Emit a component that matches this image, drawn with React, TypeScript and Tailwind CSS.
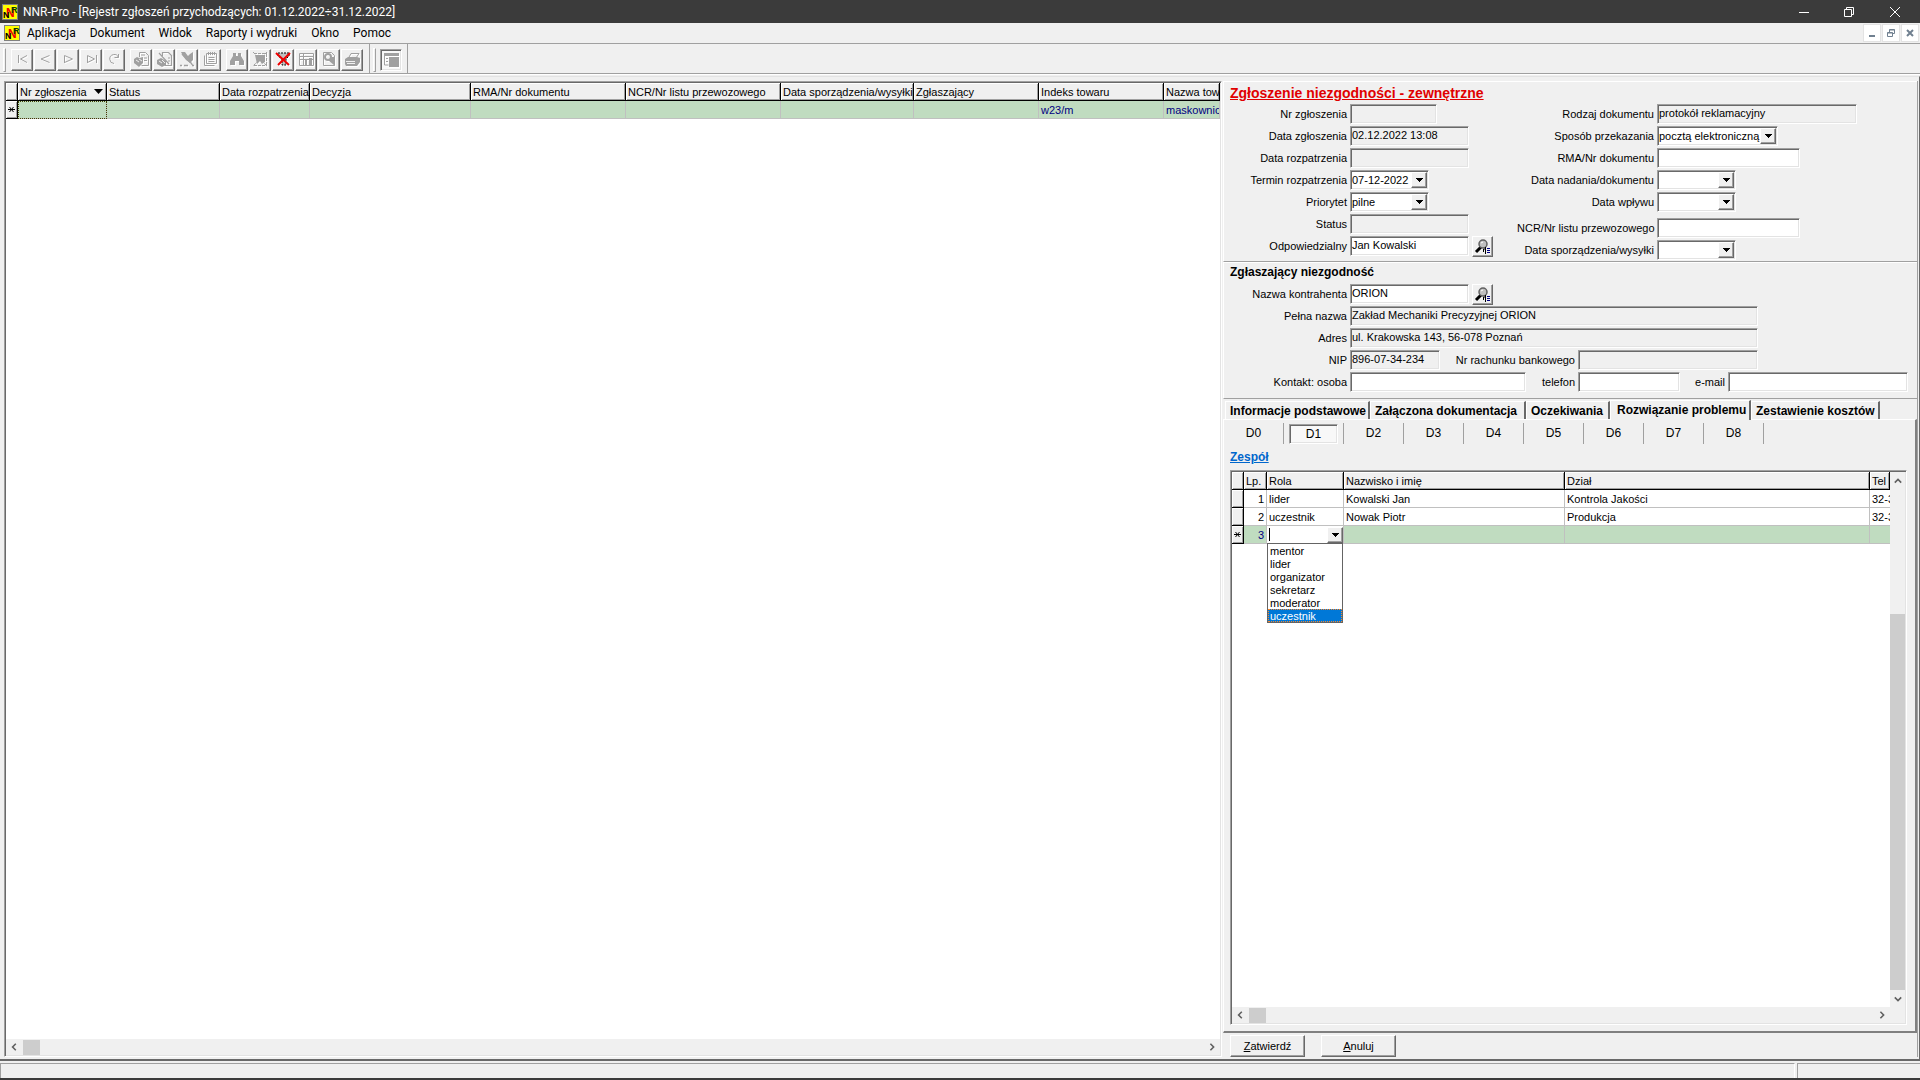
import React, { useState } from 'react';
import clsx from 'clsx';

const SUNKEN =
  'border border-t-[#a0a0a0] border-l-[#a0a0a0] border-b-white border-r-white shadow-[inset_1px_1px_0_#696969,inset_-1px_-1px_0_#e3e3e3]';
const RAISED =
  'border border-t-white border-l-white border-b-[#696969] border-r-[#696969] shadow-[inset_-1px_-1px_0_#a0a0a0] bg-[#f0f0f0]';

const menuItems = ['Aplikacja', 'Dokument', 'Widok', 'Raporty i wydruki', 'Okno', 'Pomoc'];

const registerColumns = [
  { name: 'Nr zgłoszenia', width: 'w-[89px]', sorted: true },
  { name: 'Status', width: 'w-[113px]' },
  { name: 'Data rozpatrzenia', width: 'w-[90px]' },
  { name: 'Decyzja', width: 'w-[161px]' },
  { name: 'RMA/Nr dokumentu', width: 'w-[155px]' },
  { name: 'NCR/Nr listu przewozowego', width: 'w-[155px]' },
  { name: 'Data sporządzenia/wysyłki', width: 'w-[133px]' },
  { name: 'Zgłaszający', width: 'w-[125px]' },
  { name: 'Indeks towaru', width: 'w-[125px]', value: 'w23/m' },
  { name: 'Nazwa tow', width: '', value: 'maskownic' },
];

const team = [
  { lp: 1, role: 'lider', name: 'Kowalski Jan', dept: 'Kontrola Jakości', tel: '32-3' },
  { lp: 2, role: 'uczestnik', name: 'Nowak Piotr', dept: 'Produkcja', tel: '32-3' },
];

const roles = ['mentor', 'lider', 'organizator', 'sekretarz', 'moderator', 'uczestnik'];

const detailTabs = [
  { name: 'Informacje podstawowe', width: 'w-[145px]' },
  { name: 'Załączona dokumentacja', width: 'w-[156px]' },
  { name: 'Oczekiwania', width: 'w-[84px]' },
  { name: 'Rozwiązanie problemu', width: 'w-[141px]' },
  { name: 'Zestawienie kosztów', width: 'w-[129px]' },
];

const steps = ['D0', 'D1', 'D2', 'D3', 'D4', 'D5', 'D6', 'D7', 'D8'];

const AppLogo = ({ className }: { className?: string }) => (
  <svg viewBox="0 0 16 16" className={clsx('h-4 w-4 shrink-0', className)} aria-hidden="true">
    <rect width="16" height="16" fill="#808080" />
    <rect x="1" y="1" width="14" height="14" fill="#ffff00" />
    <g fontFamily="Liberation Sans" fontWeight="700">
      <text x="4" y="13" fontSize="12" fill="#f00000">N</text>
      <text x="1" y="14" fontSize="9" fill="#000">N</text>
      <text x="9" y="9" fontSize="9" fill="#004000">R</text>
    </g>
  </svg>
);

const DownArrow = ({ className }: { className?: string }) => (
  <svg viewBox="0 0 7 4" className={clsx('h-1 w-[7px]', className)} shapeRendering="crispEdges" aria-hidden="true">
    <path d="M0 0h7v1h-1v1h-1v1h-1v1h-1v-1h-1v-1h-1v-1h-1z" fill="#000" />
  </svg>
);

const toolIcons: Record<string, React.ReactNode> = {
  first: <path d="M4.500 4v8M13 4.500L6.500 8l6.500 3.500" fill="none" stroke="currentColor" />,
  prev: <path d="M12.500 11.500L4 8l8.500-3.500" fill="none" stroke="currentColor" />,
  next: <path d="M4.500 12V4.500L12.500 8l-8 3.500" fill="none" stroke="currentColor" />,
  last: <path d="M13.500 4v8M4.500 12V4.500L11.500 8l-7 3.500" fill="none" stroke="currentColor" />,
  refresh: <path d="M12.500 6.500A4.500 4.500 0 1 0 8 12.500M12.500 3v3.500h-4" fill="none" stroke="currentColor" />,
  add: (
    <>
      <path d="M6.500 6V1.500h6l3 3v10h-7M8 4h4M11 7h3M11 9.500h3" fill="none" stroke="currentColor" />
      <path d="M1 8l3-2 2 1 4-1v6l-4 4-5-4z" fill="currentColor" />
      <path d="M3 9l3 2M6 8l3 2" stroke="#f0f0f0" />
    </>
  ),
  edit: (
    <>
      <path d="M6.500 5V1.500h6l3 3v10h-7M12 7h2M12 10h2M3 2l10 11" fill="none" stroke="currentColor" strokeWidth="1.200" />
      <path d="M1 9l4-2 5 3v4l-4 2-5-3z" fill="currentColor" />
      <path d="M3 10l3 2M6 9l3 3" stroke="#f0f0f0" />
    </>
  ),
  remove: (
    <>
      <path d="M3 3l10 10M13 13v1M1 14.500h2M5 14.500h4M13 14.500h2" fill="none" stroke="currentColor" strokeWidth="1.500" />
      <path d="M2 1h4l3 4 2-2 3-2v8l-3 3-4-3-3-4z" fill="currentColor" />
    </>
  ),
  notes: (
    <>
      <path d="M4.500 2.500h10v10h-10zM2.500 4.500v10h10" fill="none" stroke="currentColor" />
      <path d="M6.500 1v3M8.500 1v3M10.500 1v3M12.500 1v3M6.500 6.500h6M6.500 8.500h6M6.500 10.500h6" stroke="currentColor" />
    </>
  ),
  find: <path d="M4 2h3v3h2V2h3v3l3 5v4h-5v-4H6v4H1v-4l3-5z" fill="currentColor" />,
  filter: (
    <>
      <path d="M3 4h10v7l-3 2-2-3-3 3z" fill="currentColor" />
      <path d="M1 1l14 14M15 1L1 15M2 2.500h13M2 14.500h13M14.500 3v11" fill="none" stroke="currentColor" strokeDasharray="3 1" />
    </>
  ),
  clearFilter: (
    <>
      <path d="M3 2h11v3l-3 3v6H7V8L3 5z" fill="#c0c0c0" stroke="#000" strokeDasharray="2 1" />
      <path d="M1 2l13 12M15 2L3 14" fill="none" stroke="#f00000" strokeWidth="2" />
    </>
  ),
  table: (
    <>
      <path d="M1.500 2.500h14v12h-14zM2 5.500h13M2 8.500h13M5.500 3v11" fill="none" stroke="currentColor" />
      <path d="M7 9h2v5H7zM11 7h3v7h-3z" fill="currentColor" />
    </>
  ),
  preview: (
    <>
      <path d="M2.500 1.500h8l3 3v10h-11z" fill="none" stroke="currentColor" />
      <circle cx="7" cy="6" r="3" fill="none" stroke="currentColor" strokeWidth="2" />
      <path d="M7 9l7 6v-9h-3z" fill="currentColor" />
    </>
  ),
  print: (
    <>
      <path d="M4.500 7L7 2.500h8L12 7" fill="none" stroke="currentColor" />
      <path d="M1 8l3-2h9l3 1v4l-3 4H2l-1-2z" fill="currentColor" />
      <path d="M2 10.500h9M3 12.500h8" stroke="#f0f0f0" />
    </>
  ),
  panel: (
    <>
      <path d="M1 2h15v3H1z" fill="currentColor" />
      <path d="M1.500 5v9h4M3 7.500h2M3 10.500h2" fill="none" stroke="currentColor" />
      <path d="M6 6h10v10H6z" fill="currentColor" />
    </>
  ),
};

const toolGroups = [
  ['first', 'prev', 'next', 'last', 'refresh'],
  ['add', 'edit', 'remove', 'notes'],
  ['find', 'filter', 'clearFilter', 'table', 'preview', 'print'],
];

const ToolIcon = ({ name }: { name: string }) => (
  <svg viewBox="0 0 17 17" className="h-[17px] w-[17px] text-[#a0a0a0] drop-shadow-[1px_1px_0_#fff]" aria-hidden="true">
    {toolIcons[name]}
  </svg>
);

const Grip = () => <div className="h-6 w-[3px] border border-t-white border-l-white border-b-[#a0a0a0] border-r-[#a0a0a0]" />;

const Toolbar = () => (
  <div className="flex h-[30px] shrink-0 items-stretch border-b border-[#a0a0a0] shadow-[0_1px_0_#fff]">
    <div className="flex items-center gap-[5px] border-r border-[#a0a0a0] pl-[3px] pr-[6px] pt-[2px]">
      <Grip />
      {toolGroups.map((group, i) => (
        <div key={i} className="flex gap-px">
          {group.map((name) => (
            <button key={name} aria-label={name} className={clsx(RAISED, 'flex h-[22px] w-[22px] items-center justify-center')}>
              <ToolIcon name={name} />
            </button>
          ))}
        </div>
      ))}
    </div>
    <div className="flex items-center gap-1 border-r border-[#a0a0a0] pl-[3px] pr-[5px] pt-[2px]">
      <Grip />
      <button aria-label="panel" className={clsx(SUNKEN, 'flex h-[22px] w-[22px] items-center justify-center bg-[#f8f8f8]')}>
        <ToolIcon name="panel" />
      </button>
    </div>
  </div>
);

const TitleBar = () => (
  <header className="flex h-[23px] shrink-0 items-center bg-[#3b3b3b] pr-[2px] pl-[2px] text-white">
    <AppLogo />
    <h1 className="ml-[5px] flex-1 font-['Roboto','Noto_Sans',sans-serif] text-xs leading-4">
      NNR-Pro - [Rejestr zgłoszeń przychodzących: 01.12.2022÷31.12.2022]
    </h1>
    <button aria-label="Minimalizuj" className="flex h-full w-[45px] items-center justify-center">
      <svg viewBox="0 0 10 10" className="h-[10px] w-[10px]"><path d="M0 5.500h10" stroke="#fff" /></svg>
    </button>
    <button aria-label="Przywróć" className="flex h-full w-[45px] items-center justify-center">
      <svg viewBox="0 0 10 10" className="h-[10px] w-[10px]">
        <path d="M.5 2.500h7v7h-7zM2.500 2.500v-2h7v7h-2" fill="none" stroke="#fff" />
      </svg>
    </button>
    <button aria-label="Zamknij" className="flex h-full w-[47px] items-center justify-center">
      <svg viewBox="0 0 10 10" className="h-[10px] w-[10px]"><path d="M0 0l10 10M10 0L0 10" stroke="#fff" /></svg>
    </button>
  </header>
);

const MenuBar = () => (
  <nav className="flex h-[21px] shrink-0 items-center border-b border-[#a0a0a0] pl-1 pr-px">
    <AppLogo />
    <div className="ml-[7px] flex flex-1 gap-[14px] font-['Roboto','Noto_Sans',sans-serif] text-xs leading-4">
      {menuItems.map((item) => (
        <button key={item}>{item}</button>
      ))}
    </div>
    <div className="flex gap-px">
      <button aria-label="Minimalizuj okno" className="flex h-[18px] w-[18px] items-center justify-center border border-[#e3e3e3] bg-white">
        <svg viewBox="0 0 8 8" className="h-2 w-2"><path d="M1 7h6" stroke="#708090" strokeWidth="2" /></svg>
      </button>
      <button aria-label="Przywróć okno" className="flex h-[18px] w-[18px] items-center justify-center border border-[#e3e3e3] bg-white">
        <svg viewBox="0 0 8 8" className="h-2 w-2">
          <path d="M.5 3.500h5v4h-5zM.5 4h5M2.500 3V.5h5v4H6M2.500 1h5" fill="none" stroke="#708090" />
        </svg>
      </button>
      <button aria-label="Zamknij okno" className="flex h-[18px] w-[18px] items-center justify-center border border-[#e3e3e3] bg-white">
        <svg viewBox="0 0 8 8" className="h-2 w-2"><path d="M1 1l6 6M7 1L1 7" stroke="#708090" strokeWidth="2" /></svg>
      </button>
    </div>
  </nav>
);

const chevrons = {
  left: 'M6 1L2 5l4 4',
  right: 'M3 1l4 4l-4 4',
  up: 'M1 7l4-4l4 4',
  down: 'M1 3l4 4l4-4',
};

const ScrollArrow = ({ dir }: { dir: keyof typeof chevrons }) => (
  <button aria-label={`scroll ${dir}`} className="flex h-[17px] w-[17px] shrink-0 items-center justify-center">
    <svg viewBox="0 0 10 10" className="h-2 w-2">
      <path d={chevrons[dir]} fill="none" stroke="#606060" strokeWidth="2" />
    </svg>
  </button>
);

const HorizontalScroll = () => (
  <div className="flex h-4 shrink-0 items-center bg-[#f0f0f0]">
    <ScrollArrow dir="left" />
    <div className="h-[15px] w-[17px] bg-[#cdcdcd]" />
    <div className="flex-1" />
    <ScrollArrow dir="right" />
  </div>
);

const HeadCell = ({ children }: { children?: React.ReactNode }) => (
  <th className="h-[18px] overflow-hidden border-b border-r border-black bg-[#f0f0f0] p-0 pl-[2px] text-left font-normal leading-4 whitespace-nowrap shadow-[inset_1px_1px_0_#fff,inset_-1px_-1px_0_#a0a0a0]">
    {children}
  </th>
);

const Marker = ({ current }: { current?: boolean }) => (
  <td className="h-[18px] border-b border-r border-black bg-[#f0f0f0] p-0 shadow-[inset_1px_1px_0_#fff,inset_-1px_-1px_0_#a0a0a0]">
    {current && (
      <svg viewBox="0 0 7 7" className="mx-auto h-[7px] w-[7px]" aria-label="nowy wiersz">
        <path d="M0 3.500h7M1.500 1l4 5M5.500 1l-4 5" stroke="#000" />
      </svg>
    )}
  </td>
);

const CELL = 'h-[18px] overflow-hidden border-b border-r border-[#c0c0c0] p-0 pl-[2px] leading-4 whitespace-nowrap';

const RegisterGrid = () => (
  <section className={clsx(SUNKEN, 'flex min-w-0 flex-1 flex-col bg-white p-px')}>
    <div className="min-h-0 flex-1 overflow-hidden">
      <table className="w-full table-fixed border-separate border-spacing-0">
        <colgroup>
          <col className="w-3" />
          {registerColumns.map((c) => (
            <col key={c.name} className={c.width} />
          ))}
        </colgroup>
        <thead>
          <tr>
            <HeadCell />
            {registerColumns.map((c) => (
              <HeadCell key={c.name}>
                {c.sorted ? (
                  <span className="flex items-center justify-between pr-[3px]">
                    {c.name}
                    <svg viewBox="0 0 9 5" className="h-[5px] w-[9px]"><path d="M0 0h9L4.500 5z" /></svg>
                  </span>
                ) : (
                  c.name
                )}
              </HeadCell>
            ))}
          </tr>
        </thead>
        <tbody>
          <tr className="bg-[#c0dcc0] text-[#000080]">
            <Marker current />
            {registerColumns.map((c) => (
              <td key={c.name} className={clsx(CELL, c.sorted && 'outline-1 -outline-offset-1 outline-dotted outline-[#404000]')}>
                {c.value}
              </td>
            ))}
          </tr>
        </tbody>
      </table>
    </div>
    <HorizontalScroll />
  </section>
);

type FieldProps = {
  id: string;
  label: string;
  value?: string;
  readOnly?: boolean;
  width: string;
  labelWidth?: string;
  children?: React.ReactNode;
};

const TextField = ({ id, label, value = '', readOnly, width, labelWidth = 'w-[123px]', children }: FieldProps) => (
  <div className="flex h-5 items-center gap-[3px]">
    <label htmlFor={id} className={clsx('shrink-0 text-right leading-4 whitespace-nowrap', labelWidth)}>{label}</label>
    <input
      id={id}
      defaultValue={value}
      readOnly={readOnly}
      className={clsx(SUNKEN, 'h-5 pb-[2px] pl-px leading-4 outline-none', width, readOnly ? 'bg-[#f0f0f0]' : 'bg-white')}
    />
    {children}
  </div>
);

const ComboField = ({ id, label, value = '', width, labelWidth = 'w-[123px]' }: FieldProps) => (
  <div className="flex h-5 items-center gap-[3px]">
    <label htmlFor={id} className={clsx('shrink-0 text-right leading-4 whitespace-nowrap', labelWidth)}>{label}</label>
    <div className={clsx('relative', width)}>
      <select id={id} defaultValue={value} className={clsx(SUNKEN, 'block h-5 w-full appearance-none bg-white pl-px leading-4 outline-none')}>
        <option>{value}</option>
      </select>
      <span className={clsx(RAISED, 'pointer-events-none absolute top-[2px] right-[2px] flex h-4 w-4 items-center justify-center')}>
        <DownArrow />
      </span>
    </div>
  </div>
);

const LookupButton = () => (
  <button aria-label="Wybierz" className={clsx(RAISED, 'flex h-[21px] w-[21px] shrink-0 items-center justify-center')}>
    <svg viewBox="0 0 17 17" className="h-[17px] w-[17px]">
      <path d="M7 9l-5 5" stroke="#000" strokeWidth="3" />
      <circle cx="9" cy="6" r="4" fill="#c0c0c0" stroke="#606060" strokeWidth="1.500" />
      <path d="M7 5l2-1" stroke="#fff" />
      <path d="M11.500 9v7M9.500 11h2M9.500 11v3" stroke="#000" fill="none" />
      <path d="M13 10.500h3M13 12.500h3M13 14.500h3" stroke="#000080" />
    </svg>
  </button>
);

const ComplaintForm = () => (
  <section className="h-[181px] border-t border-l border-white border-b border-b-[#a0a0a0] pt-[2px]">
    <h2 className="h-5 pl-[6px] text-sm leading-[18px] font-bold text-[#e00000] underline">Zgłoszenie niezgodności - zewnętrzne</h2>
    <div className="flex">
      <div className="flex w-[293px] flex-col gap-[2px]">
        <TextField id="nr" label="Nr zgłoszenia" width="w-[87px]" readOnly />
        <TextField id="data-zgl" label="Data zgłoszenia" value="02.12.2022 13:08" width="w-[119px]" readOnly />
        <TextField id="data-rozp" label="Data rozpatrzenia" width="w-[119px]" readOnly />
        <ComboField id="termin" label="Termin rozpatrzenia" value="07-12-2022" width="w-[79px]" />
        <ComboField id="priorytet" label="Priorytet" value="pilne" width="w-[79px]" />
        <TextField id="status" label="Status" width="w-[119px]" readOnly />
        <TextField id="odp" label="Odpowiedzialny" value="Jan Kowalski" width="w-[119px]">
          <LookupButton />
        </TextField>
      </div>
      <div className="flex flex-col gap-[2px]">
        <TextField id="rodzaj" label="Rodzaj dokumentu" value="protokół reklamacyjny" width="w-[200px]" labelWidth="w-[137px]" readOnly />
        <ComboField id="sposob" label="Sposób przekazania" value="pocztą elektroniczną" width="w-[121px]" labelWidth="w-[137px]" />
        <TextField id="rma" label="RMA/Nr dokumentu" width="w-[143px]" labelWidth="w-[137px]" />
        <ComboField id="nadanie" label="Data nadania/dokumentu" width="w-[79px]" labelWidth="w-[137px]" />
        <ComboField id="wplyw" label="Data wpływu" width="w-[79px]" labelWidth="w-[137px]" />
        <div className="mt-1 flex flex-col gap-[2px]">
          <TextField id="ncr" label="NCR/Nr listu przewozowego" width="w-[143px]" labelWidth="w-[137px]" />
          <ComboField id="sporz" label="Data sporządzenia/wysyłki" width="w-[79px]" labelWidth="w-[137px]" />
        </div>
      </div>
    </div>
  </section>
);

const ReporterForm = () => (
  <section className="h-[137px] border-t border-l border-white border-b border-b-[#a0a0a0]">
    <h3 className="h-[21px] pl-[6px] text-xs leading-[18px] font-bold">Zgłaszający niezgodność</h3>
    <div className="flex flex-col gap-[2px]">
      <TextField id="kontrahent" label="Nazwa kontrahenta" value="ORION" width="w-[119px]">
        <LookupButton />
      </TextField>
      <TextField id="pelna" label="Pełna nazwa" value="Zakład Mechaniki Precyzyjnej ORION" width="w-[408px]" readOnly />
      <TextField id="adres" label="Adres" value="ul. Krakowska 143, 56-078 Poznań" width="w-[408px]" readOnly />
      <div className="flex">
        <TextField id="nip" label="NIP" value="896-07-34-234" width="w-[90px]" readOnly />
        <TextField id="rachunek" label="Nr rachunku bankowego" width="w-[180px]" labelWidth="w-[135px]" readOnly />
      </div>
      <div className="flex">
        <TextField id="osoba" label="Kontakt: osoba" width="w-[176px]" />
        <TextField id="telefon" label="telefon" width="w-[102px]" labelWidth="w-[49px]" />
        <TextField id="email" label="e-mail" width="w-[180px]" labelWidth="w-[45px]" />
      </div>
    </div>
  </section>
);

const TeamGrid = () => {
  const [role, setRole] = useState('uczestnik');

  return (
    <div className={clsx(SUNKEN, 'flex min-h-0 flex-1 flex-col bg-white p-px')}>
      <div className="flex min-h-0 flex-1">
        <div className="min-w-0 flex-1 overflow-hidden">
          <table className="w-full table-fixed border-separate border-spacing-0">
            <colgroup>
              <col className="w-3" />
              <col className="w-[23px]" />
              <col className="w-[77px]" />
              <col className="w-[221px]" />
              <col className="w-[305px]" />
              <col />
            </colgroup>
            <thead>
              <tr>
                <HeadCell />
                <HeadCell>Lp.</HeadCell>
                <HeadCell>Rola</HeadCell>
                <HeadCell>Nazwisko i imię</HeadCell>
                <HeadCell>Dział</HeadCell>
                <HeadCell>Tel</HeadCell>
              </tr>
            </thead>
            <tbody>
              {team.map((row) => (
                <tr key={row.lp}>
                  <Marker />
                  <td className={clsx(CELL, 'pr-[2px] text-right')}>{row.lp}</td>
                  <td className={CELL}>{row.role}</td>
                  <td className={CELL}>{row.name}</td>
                  <td className={CELL}>{row.dept}</td>
                  <td className={clsx(CELL, 'border-r-0')}>{row.tel}</td>
                </tr>
              ))}
              <tr className="bg-[#c0dcc0]">
                <Marker current />
                <td className={clsx(CELL, 'pr-[2px] text-right text-[#000080]')}>3</td>
                <td className="relative h-[18px] border-r border-b border-[#c0c0c0] bg-white p-0">
                  <div className="flex h-[17px] items-center justify-between pl-[2px]">
                    <span className="h-[13px] w-px bg-black" />
                    <button aria-label="Rozwiń listę ról" className={clsx(RAISED, 'flex h-4 w-4 items-center justify-center')}>
                      <DownArrow />
                    </button>
                  </div>
                  <ul role="listbox" className="absolute top-[17px] left-0 z-10 w-[76px] border border-[#646464] bg-white">
                    {roles.map((r) => (
                      <li
                        key={r}
                        role="option"
                        aria-selected={r === role}
                        onClick={() => setRole(r)}
                        className={clsx(
                          'h-[13px] pl-[2px] leading-[14px]',
                          r === role && 'bg-[#0078d7] text-white outline-1 -outline-offset-1 outline-dotted outline-[#ff8728]'
                        )}
                      >
                        {r}
                      </li>
                    ))}
                  </ul>
                </td>
                <td className={CELL} />
                <td className={CELL} />
                <td className={clsx(CELL, 'border-r-0')} />
              </tr>
            </tbody>
          </table>
        </div>
        <div className="flex w-[15px] shrink-0 flex-col items-center bg-[#f0f0f0]">
          <ScrollArrow dir="up" />
          <div className="flex-[125]" />
          <div className="w-full flex-[375] bg-[#cdcdcd]" />
          <ScrollArrow dir="down" />
        </div>
      </div>
      <div className="flex bg-[#f0f0f0]">
        <div className="flex-1">
          <HorizontalScroll />
        </div>
        <div className="w-[15px]" />
      </div>
    </div>
  );
};

const DetailTabs = () => {
  const [tab, setTab] = useState('Rozwiązanie problemu');
  const [step, setStep] = useState('D1');

  return (
    <div className="flex min-h-0 flex-1 flex-col">
      <div role="tablist" className="flex h-[20px] items-end pl-[2px]">
        {detailTabs.map((t) => (
          <button
            key={t.name}
            role="tab"
            aria-selected={t.name === tab}
            onClick={() => setTab(t.name)}
            className={clsx(
              'border-t border-l border-t-white border-l-white border-r-2 border-r-[#696969] text-left text-xs font-bold whitespace-nowrap',
              t.width,
              t.name === tab ? 'z-10 -mb-px h-5 bg-[#f0f0f0] pb-[2px] pl-[6px] leading-4' : 'h-[18px] pl-1 leading-4'
            )}
          >
            {t.name}
          </button>
        ))}
      </div>
      <div className="flex min-h-0 flex-1 flex-col border-t border-r-2 border-b-2 border-l border-t-white border-r-[#808080] border-b-[#808080] border-l-white pt-[3px] pr-2 pb-[6px] pl-[6px]">
        <div className="-ml-[6px] flex h-[21px]">
          {steps.map((s) => (
            <div key={s} className="flex w-[60px] items-center justify-center border-r border-[#a0a0a0]">
              <button
                onClick={() => setStep(s)}
                className={clsx('h-5 w-[49px] text-xs', s === step ? [SUNKEN, 'bg-[#f8f8f8] leading-4'] : 'pb-[2px] leading-4')}
              >
                {s}
              </button>
            </div>
          ))}
        </div>
        <a href="#zespol" className="my-[5px] text-xs leading-4 font-bold text-[#0066cc] underline">Zespół</a>
        <TeamGrid />
      </div>
    </div>
  );
};

export default function App() {
  return (
    <div className="flex h-screen flex-col overflow-hidden bg-[#f0f0f0] font-['Liberation_Sans',Arial,sans-serif] text-[11px] text-black">
      <TitleBar />
      <MenuBar />
      <Toolbar />
      <main className="mt-[2px] flex min-h-0 flex-1 border-t border-r border-b-2 border-t-[#e3e3e3] border-r-[#696969] border-b-[#696969] pt-1 pr-px pb-[2px] pl-1">
        <RegisterGrid />
        <aside className="ml-px flex w-[695px] shrink-0 flex-col border-r border-[#a0a0a0]">
          <ComplaintForm />
          <ReporterForm />
          <DetailTabs />
          <div className="mt-[2px] flex h-[22px] shrink-0 gap-4 pl-[7px]">
            <button className={clsx(RAISED, 'w-[75px] leading-4')}><u>Z</u>atwierdź</button>
            <button className={clsx(RAISED, 'w-[75px] leading-4')}><u>A</u>nuluj</button>
          </div>
        </aside>
      </main>
      <footer className="flex h-[19px] shrink-0 gap-[2px] border-b-2 border-[#3b3b3b] pt-[2px]">
        <div className="flex-1 border-t border-r border-l border-t-[#a0a0a0] border-r-white border-l-[#a0a0a0]" />
        <div className="w-[123px] border-t border-l border-[#a0a0a0]" />
      </footer>
    </div>
  );
}
